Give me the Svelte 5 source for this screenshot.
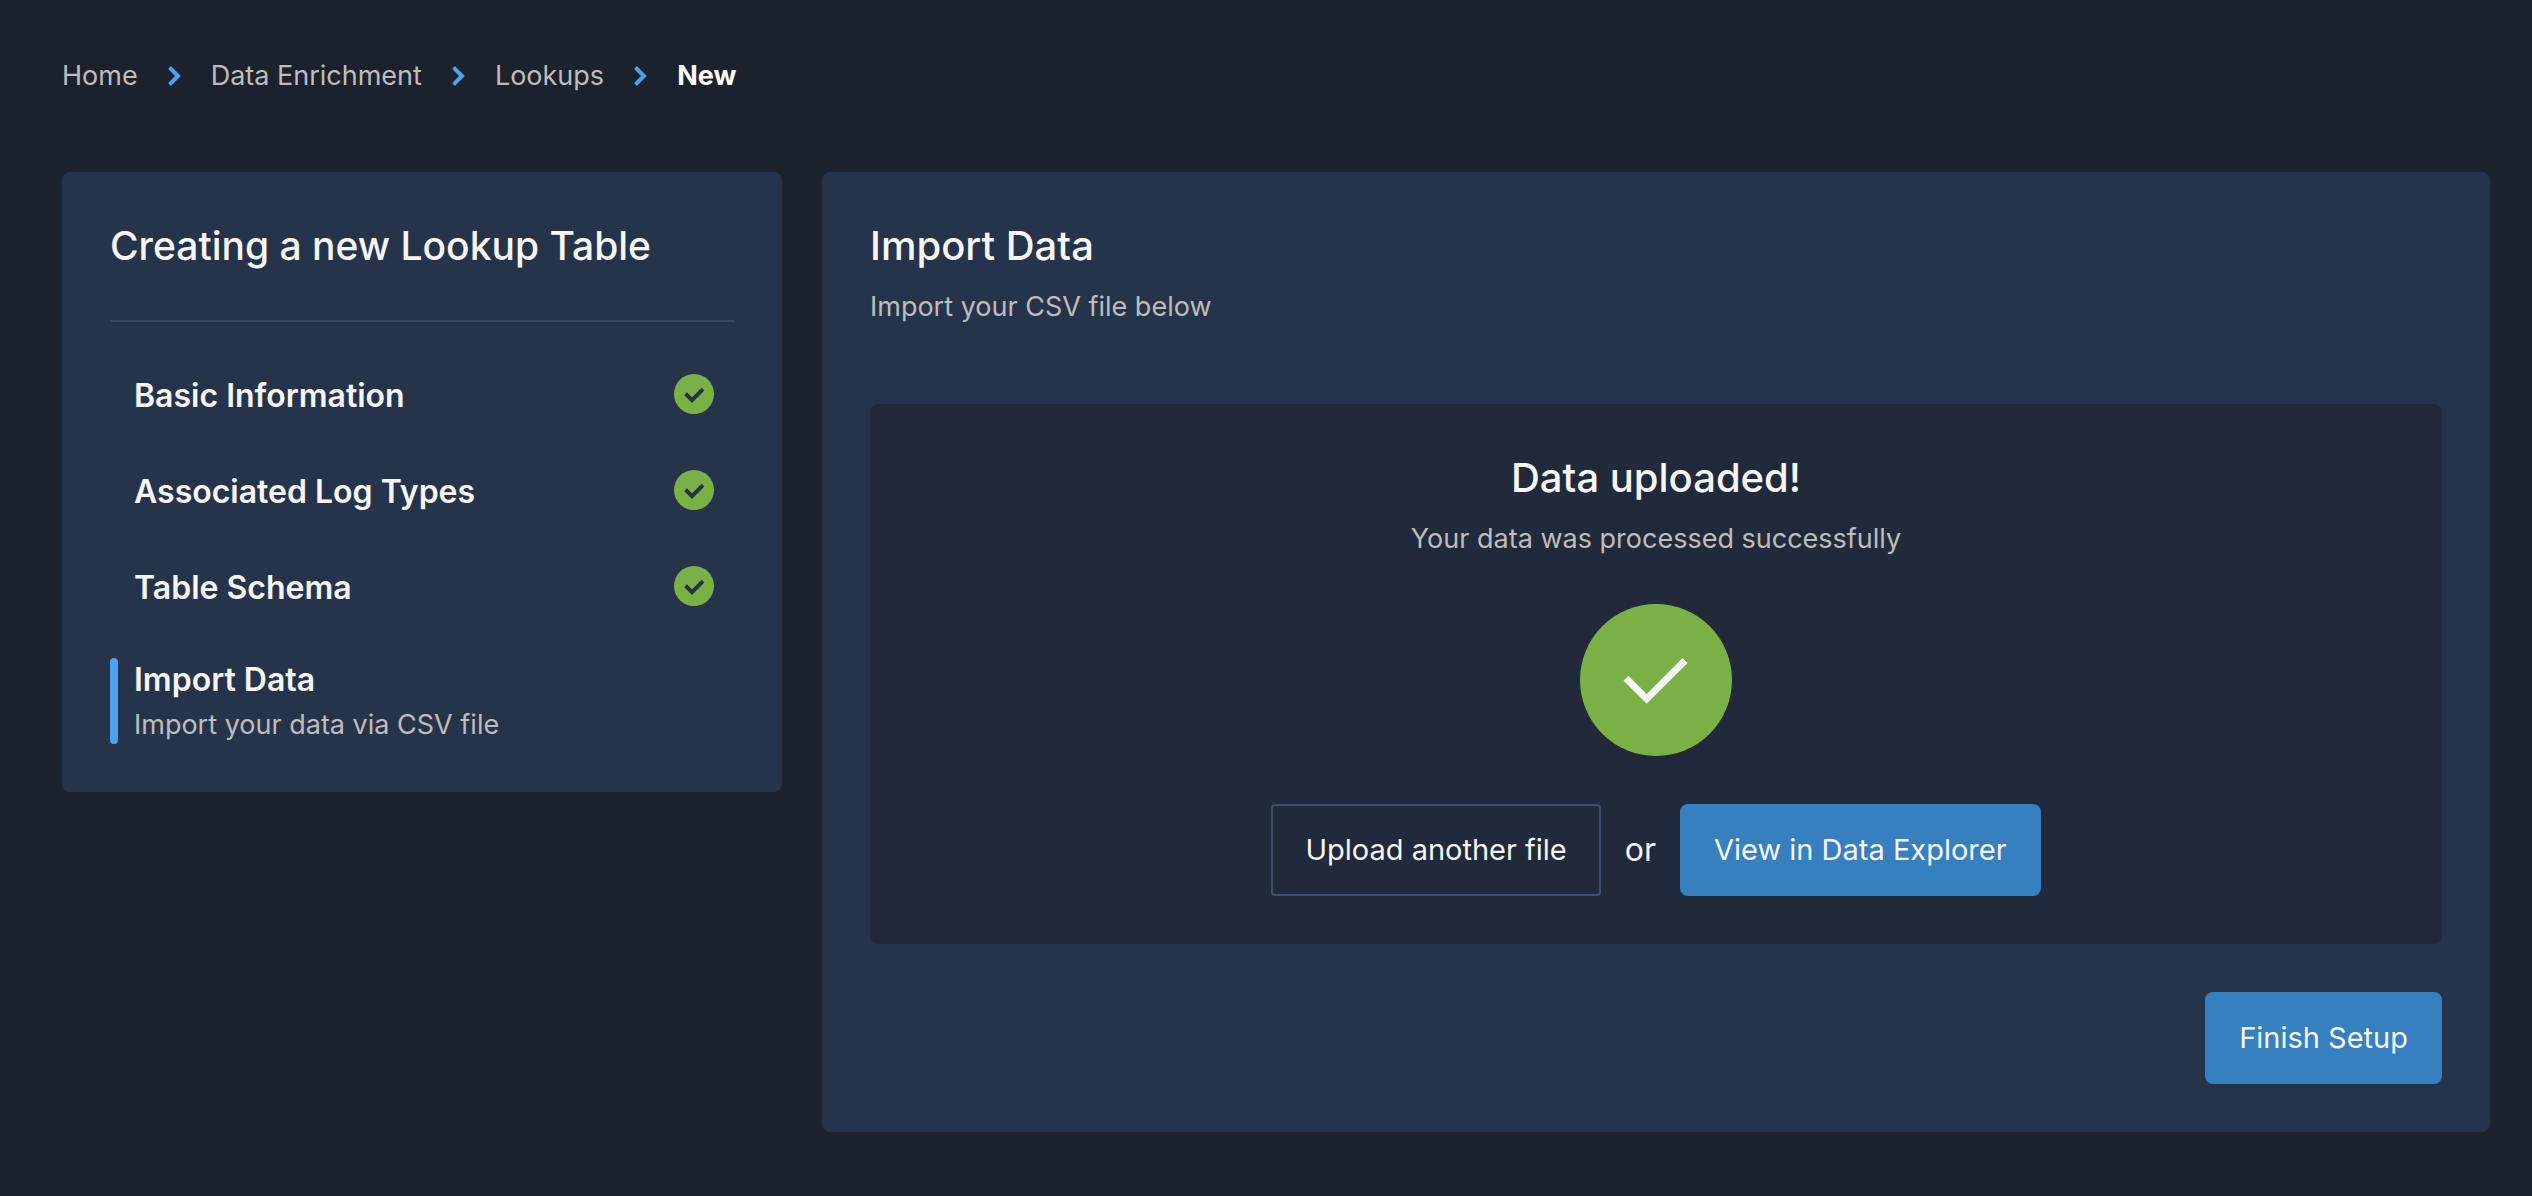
<script>
  const crumbs = ['Home', 'Data Enrichment', 'Lookups'];
  const doneSteps = ['Basic Information', 'Associated Log Types', 'Table Schema'];
</script>

<div class="page">
  <nav class="crumbs" aria-label="Breadcrumb">
    {#each crumbs as crumb}
      <a href="#top">{crumb}</a>
      <svg class="chevron" viewBox="0 0 13 20" aria-hidden="true"><path d="M1.5 1.5 10 10l-8.500 8.500" /></svg>
    {/each}
    <span class="current" aria-current="page">New</span>
  </nav>

  <div class="columns">
    <aside class="panel steps">
      <h1>Creating a new Lookup Table</h1>
      <hr />
      <ol>
        {#each doneSteps as step}
          <li class="done">
            <span class="step-name">{step}</span>
            <svg class="badge" viewBox="0 0 40 40" role="img" aria-label="Complete">
              <circle cx="20" cy="20" r="20" />
              <path d="M11.5 19.700l6.500 6.500 11-11" />
            </svg>
          </li>
        {/each}
        <li class="active" aria-current="step">
          <span class="step-name">Import Data</span>
          <span class="hint">Import your data via CSV file</span>
        </li>
      </ol>
    </aside>

    <main class="panel content">
      <h2>Import Data</h2>
      <p class="hint">Import your CSV file below</p>

      <section class="result">
        <h2>Data uploaded!</h2>
        <p class="hint">Your data was processed successfully</p>
        <svg class="success" viewBox="0 0 152 152" aria-hidden="true">
          <circle cx="76" cy="76" r="76" />
          <path d="M46 74.200l20.700 20.700 38.400-38.400" />
        </svg>
        <div class="actions">
          <button class="outline" type="button">Upload another file</button>
          <span class="or">or</span>
          <button type="button">View in Data Explorer</button>
        </div>
      </section>

      <button class="finish" type="button">Finish Setup</button>
    </main>
  </div>
</div>

<style>
  :global(body) {
    margin: 0;
    background: #1c212e;
  }

  .page {
    padding: 52px 42px 64px 62px;
    color: #f6f6f6;
    font-family: Inter, 'Liberation Sans', sans-serif;
    font-size: 27px;
    line-height: 48px;
  }

  .crumbs {
    display: flex;
    align-items: center;
    gap: 30px;
    margin-bottom: 72px;
  }

  .crumbs a {
    color: #bdbdbd;
    text-decoration: none;
  }

  .chevron {
    flex: none;
    width: 13px;
    height: 20px;
    fill: none;
    stroke: #4ba3f0;
    stroke-width: 4;
  }

  .current {
    color: #fff;
    font-weight: 700;
  }

  .columns {
    display: flex;
    align-items: flex-start;
    gap: 40px;
  }

  .panel {
    box-sizing: border-box;
    padding: 48px;
    border-radius: 8px;
    background: #26344b;
  }

  .steps {
    flex: 0 0 720px;
  }

  .content {
    display: flex;
    flex: 1;
    flex-direction: column;
  }

  h1,
  h2 {
    margin: 0;
    font-size: 40px;
    font-weight: 500;
    line-height: 52px;
  }

  h1 {
    font-size: 39px;
  }

  hr {
    width: 100%;
    height: 2px;
    margin: 48px 0 24px;
    border: 0;
    background: #38475e;
  }

  ol {
    margin: 0;
    padding: 0;
    list-style: none;
  }

  .done {
    display: flex;
    align-items: center;
    justify-content: space-between;
    height: 96px;
    padding: 0 20px 0 24px;
  }

  .step-name {
    display: block;
    font-size: 32px;
    font-weight: 600;
    line-height: 44px;
  }

  .done .step-name {
    padding-top: 4px;
  }

  .badge {
    width: 40px;
    height: 40px;
    fill: #7ab045;
  }

  .badge path {
    fill: none;
    stroke: #26344b;
    stroke-width: 4;
  }

  .active {
    position: relative;
    margin-top: 24px;
    padding-left: 24px;
  }

  .active::before {
    position: absolute;
    inset: 0 auto 0 0;
    width: 8px;
    border-radius: 4px;
    background: #4ba3f0;
    content: '';
  }

  .hint {
    display: block;
    margin: 4px 0 0;
    color: #bdbdbd;
    line-height: 38px;
  }

  p.hint {
    margin-top: 16px;
  }

  .result {
    display: flex;
    flex-direction: column;
    align-items: center;
    margin: 78px 0 48px;
    padding: 48px;
    border-radius: 8px;
    background: #202a3b;
  }

  .success {
    width: 152px;
    height: 152px;
    margin: 46px 0 48px;
    fill: #7ab045;
  }

  .success path {
    fill: none;
    stroke: #f6f6f6;
    stroke-width: 7;
  }

  .actions {
    display: flex;
    align-items: center;
    gap: 24px;
  }

  button {
    box-sizing: border-box;
    padding: 24px 34px;
    border: 0;
    border-radius: 8px;
    background: #3680bf;
    color: #f6f6f6;
    font-family: inherit;
    font-size: 29px;
    line-height: 44px;
    cursor: pointer;
  }

  .outline {
    padding: 22px 32px;
    border: 2px solid #40506a;
    border-radius: 4px;
    background: none;
  }

  .or {
    font-size: 32px;
  }

  .finish {
    align-self: flex-end;
  }
</style>
